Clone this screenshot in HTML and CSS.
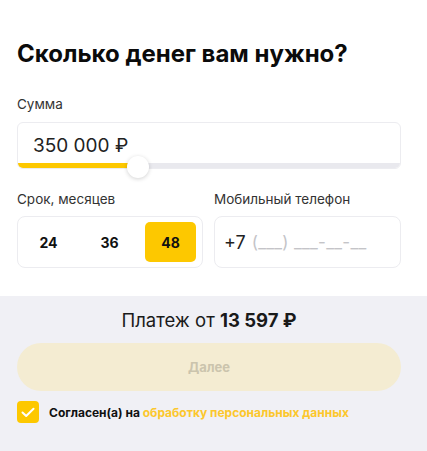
FILE: index.html
```html
<!DOCTYPE html>
<html lang="ru">
<head>
<meta charset="utf-8">
<link rel="stylesheet" href="styles.css">
</head>
<body>
<div class="top">
  <h1 class="title">Сколько денег вам нужно?</h1>
  <div class="label">Сумма</div>
  <div class="amount">
    <div class="amount-box">
      <span class="amount-value">350 000 ₽</span>
      <div class="track"><div class="track-fill" style="width: 110px"></div></div>
    </div>
    <div class="thumb" style="left: 110px"></div>
  </div>
  <div class="row">
    <div class="col col-term">
      <div class="label">Срок, месяцев</div>
      <div class="term-box">
        <div class="term">24</div>
        <div class="term">36</div>
        <div class="term term-active">48</div>
      </div>
    </div>
    <div class="col col-phone">
      <div class="label">Мобильный телефон</div>
      <div class="phone-box"><span class="phone-code">+7</span><span class="phone-mask">(___) ___-__-__</span></div>
    </div>
  </div>
</div>
<div class="bottom">
  <div class="payment">Платеж от <b>13 597 ₽</b></div>
  <button class="next">Далее</button>
  <div class="agree">
    <span class="check"><svg width="14" height="11" viewBox="0 0 14 11"><path d="M1.5 5.5 L5.2 9 L12.5 1.8" fill="none" stroke="#fff" stroke-width="2" stroke-linecap="round" stroke-linejoin="round"/></svg></span>
    <span class="agree-text">Согласен(а) на <span class="link">обработку персональных данных</span></span>
  </div>
</div>
</body>
</html>
```
FILE: styles.css
```css
html, body {
  margin: 0;
  padding: 0;
  background: #fff;
  font-family: Inter, "Noto Sans", sans-serif;
  color: #111;
}
.top {
  padding: 38px 26px 28px 17px;
}
.title {
  margin: 0;
  font-size: 24px;
  line-height: 32px;
  font-weight: 700;
  letter-spacing: 0;
  color: #0b0b0b;
}
.label {
  font-size: 13.5px;
  line-height: 16px;
  color: #333;
}
.top > .label {
  margin-top: 26px;
}
.amount {
  position: relative;
  margin-top: 10px;
}
.amount-box {
  border: 1px solid #ececf0;
  border-radius: 6px;
  overflow: hidden;
  background: #fff;
  display: flex;
  flex-direction: column;
}
.amount-value {
  font-size: 19px;
  line-height: 22px;
  padding: 12px 15px 6px;
  color: #222;
}
.track {
  height: 5px;
  background: #e9e9ee;
}
.track-fill {
  height: 100%;
  background: #fdc800;
}
.thumb {
  position: absolute;
  top: 34px;
  width: 22px;
  height: 22px;
  border-radius: 50%;
  background: #fff;
  box-shadow: 0 1px 4px rgba(0,0,0,0.18);
}
.row {
  display: flex;
  gap: 11px;
  margin-top: 22px;
}
.col-term {
  width: 186px;
}
.col-phone {
  flex: 1;
}
.row .label {
  margin-bottom: 9px;
}
.term-box {
  border: 1px solid #ececf0;
  border-radius: 8px;
  padding: 5px;
  display: flex;
  gap: 10px;
  height: 40px;
}
.term {
  width: 51px;
  display: flex;
  align-items: center;
  justify-content: center;
  border-radius: 5px;
  font-size: 14px;
  font-weight: 700;
  color: #111;
}
.term-active {
  background: #fdc800;
}
.phone-box {
  border: 1px solid #ececf0;
  border-radius: 8px;
  height: 50px;
  display: flex;
  align-items: center;
  gap: 6px;
  padding-left: 9px;
  font-size: 18px;
  white-space: pre;
}
.phone-code {
  color: #222;
}
.phone-mask {
  color: #c4c4c8;
  font-size: 17px;
  letter-spacing: 0.3px;
}
.bottom {
  background: #f0f0f5;
  padding: 11px 26px 28px 17px;
}
.payment {
  text-align: center;
  font-size: 18.5px;
  line-height: 26px;
  color: #1a1a1a;
}
.payment b {
  font-weight: 700;
}
.next {
  display: block;
  width: 100%;
  height: 48px;
  margin-top: 10px;
  border: 0;
  border-radius: 24px;
  background: #f4ecd2;
  color: #cbc4ad;
  font-family: inherit;
  font-size: 13px;
  font-weight: 700;
}
.agree {
  display: flex;
  align-items: center;
  gap: 10px;
  margin-top: 10px;
}
.check {
  width: 22px;
  height: 22px;
  border-radius: 4px;
  background: #fdc800;
  display: flex;
  align-items: center;
  justify-content: center;
}
.agree-text {
  font-size: 12px;
  font-weight: 700;
  color: #111;
}
.link {
  color: #fcc72c;
}
```
